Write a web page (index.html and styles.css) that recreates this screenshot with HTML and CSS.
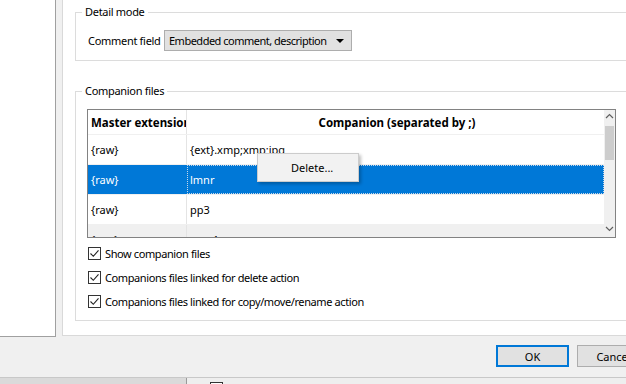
FILE: index.html
```html
<!DOCTYPE html>
<html lang="en">
<head>
    <meta charset="UTF-8">
    <title>Settings</title>
    <link rel="stylesheet" href="styles.css">
</head>
<body>
    <div class="app">
        <div class="main">
            <div class="sidebar"></div>
            <div class="panel">
                <fieldset class="group detail">
                    <legend>Detail mode</legend>
                    <div class="field-row">
                        <span class="label">Comment field</span>
                        <div class="combo">
                            <span>Embedded comment, description</span>
                            <svg width="8" height="4" viewBox="0 0 8 4"><path d="M0 0h8L4 4z" fill="#000"/></svg>
                        </div>
                    </div>
                </fieldset>

                <fieldset class="group companions">
                    <legend>Companion files</legend>
                    <div class="grid-wrap">
                        <div class="grid">
                            <div class="row head">
                                <div class="cell c1">Master extension</div>
                                <div class="cell c2">Companion (separated by ;)</div>
                            </div>
                            <div class="row">
                                <div class="cell c1">{raw}</div>
                                <div class="cell c2">{ext}.xmp;xmp;jpg</div>
                            </div>
                            <div class="row selected">
                                <div class="cell c1">{raw}</div>
                                <div class="cell c2 focus">lmnr</div>
                            </div>
                            <div class="row">
                                <div class="cell c1">{raw}</div>
                                <div class="cell c2">pp3</div>
                            </div>
                            <div class="row last">
                                <div class="cell c1">{raw}</div>
                                <div class="cell c2">xmp1</div>
                            </div>
                        </div>
                        <div class="vscroll">
                            <svg width="9" height="6" viewBox="0 0 9 6"><path d="M1 5l3.5-3.5L8 5" fill="none" stroke="#606060" stroke-width="1.2"/></svg>
                            <div class="thumb"></div>
                            <div class="track"></div>
                            <svg width="9" height="6" viewBox="0 0 9 6"><path d="M1 1l3.5 3.5L8 1" fill="none" stroke="#606060" stroke-width="1.2"/></svg>
                        </div>
                        <div class="context-menu">Delete...</div>
                    </div>

                    <label class="check"><span class="box"><svg width="11" height="11" viewBox="0 0 11 11"><path d="M1.5 5.5l2.8 2.8 5.2-6" fill="none" stroke="#222" stroke-width="1.1"/></svg></span>Show companion files</label>
                    <label class="check"><span class="box"><svg width="11" height="11" viewBox="0 0 11 11"><path d="M1.5 5.5l2.8 2.8 5.2-6" fill="none" stroke="#222" stroke-width="1.1"/></svg></span>Companions files linked for delete action</label>
                    <label class="check"><span class="box"><svg width="11" height="11" viewBox="0 0 11 11"><path d="M1.5 5.5l2.8 2.8 5.2-6" fill="none" stroke="#222" stroke-width="1.1"/></svg></span>Companions files linked for copy/move/rename action</label>
                </fieldset>
            </div>
        </div>

        <div class="buttons">
            <button class="btn default">OK</button>
            <button class="btn">Cancel</button>
        </div>

        <div class="statusbar">
            <div class="status-left"></div>
            <div class="status-right"><span class="mini-box"></span></div>
        </div>
    </div>
</body>
</html>
```

FILE: styles.css
```css
* {
    margin: 0;
    padding: 0;
    box-sizing: border-box;
}
body {
    font-family: 'Noto Sans', sans-serif;
    font-size: 11px;
    letter-spacing: -0.3px;
    color: #000;
    background: #f0f0f0;
    width: 626px;
    height: 384px;
    overflow: hidden;
}
.app {
    display: flex;
    flex-direction: column;
    width: 720px;
}
.main {
    display: flex;
    height: 337px;
}
.sidebar {
    width: 56px;
    height: 337px;
    background: #fff;
    border-right: 1px solid #a0a0a0;
    border-bottom: 1px solid #a0a0a0;
}
.panel {
    margin-left: 6px;
    width: 620px;
    height: 336px;
    background: #fff;
    border-left: 1px solid #d9d9d9;
    border-bottom: 1px solid #d9d9d9;
    padding: 5px 0 0 12px;
}
.group {
    border: 1px solid #dcdcdc;
    margin-right: 30px;
    padding: 0;
}
.group legend {
    margin-left: 6px;
    padding: 0 3px;
    line-height: 14px;
}
.detail {
    height: 56px;
    padding: 11px 0 0 12px;
}
.detail legend {
    margin-left: -6px;
}
.field-row {
    display: flex;
    align-items: center;
}
.label {
    width: 76px;
}
.combo {
    width: 188px;
    height: 21px;
    background: #e1e1e1;
    border: 1px solid #adadad;
    display: flex;
    align-items: center;
    justify-content: space-between;
    padding: 0 7px 0 4px;
    white-space: nowrap;
    letter-spacing: -0.5px;
}
.companions {
    margin-top: 23px;
    height: 237px;
    padding: 11px 0 0 11px;
}
.companions legend {
    margin-left: -5px;
}
.grid-wrap {
    position: relative;
    display: flex;
    width: 529px;
    height: 129px;
    border: 1px solid #828282;
    overflow: hidden;
    letter-spacing: 0;
}
.grid {
    flex: 1;
}
.row {
    display: flex;
    height: 30px;
    border-bottom: 1px solid #f0f0f0;
}
.row.head {
    height: 25px;
    font-weight: bold;
    font-size: 11.5px;
}
.cell {
    display: flex;
    align-items: center;
    padding-left: 3px;
    white-space: nowrap;
    overflow: hidden;
}
.c1 {
    width: 99px;
    border-right: 1px solid #e4e4e4;
}
.c2 {
    flex: 1;
}
.head .c2 {
    justify-content: center;
}
.row.selected {
    background: #0078d7;
    color: #fff;
}
.row.selected .c1 {
    border-right-color: #0078d7;
}
.focus {
    outline: 1px dotted #c8d8ea;
    outline-offset: -1px;
}
.row.last {
    background: #f0f0f0;
}
.vscroll {
    width: 11px;
    background: #f0f0f0;
    display: flex;
    flex-direction: column;
    align-items: center;
    padding-top: 3px;
}
.vscroll svg {
    flex: none;
}
.thumb {
    width: 9px;
    height: 34px;
    margin-top: 7px;
    background: #cdcdcd;
}
.track {
    flex: 1;
}
.vscroll svg:last-child {
    margin-bottom: 5px;
}
.context-menu {
    position: absolute;
    left: 169px;
    top: 43px;
    width: 102px;
    height: 29px;
    background: #f2f2f2;
    border: 1px solid #cccccc;
    box-shadow: 2px 2px 3px rgba(0, 0, 0, 0.25);
    padding: 6px 0 0 33px;
}
.check {
    display: flex;
    align-items: center;
    gap: 4px;
    height: 24px;
    letter-spacing: -0.4px;
}
.check:first-of-type {
    margin-top: 3px;
}
.box {
    width: 13px;
    height: 13px;
    border: 1px solid #333;
    background: #fff;
    display: flex;
    margin-left: 1px;
}
.buttons {
    height: 40px;
    display: flex;
    gap: 8px;
    padding: 8px 0 0 496px;
}
.btn {
    width: 73px;
    height: 22px;
    font-family: inherit;
    font-size: 11px;
    background: #e1e1e1;
    border: 1px solid #adadad;
}
.btn.default {
    border: 2px solid #0078d7;
}
.statusbar {
    display: flex;
    height: 7px;
    border-top: 1px solid #c8c8c8;
}
.status-left {
    width: 187px;
    background: #dadada;
    border-right: 1px solid #9a9a9a;
}
.status-right {
    flex: 1;
    background: #eeeeee;
    padding: 4px 0 0 23px;
}
.mini-box {
    display: block;
    width: 13px;
    height: 6px;
    border: 1px solid #333;
    border-bottom: none;
    background: #fff;
}
```
